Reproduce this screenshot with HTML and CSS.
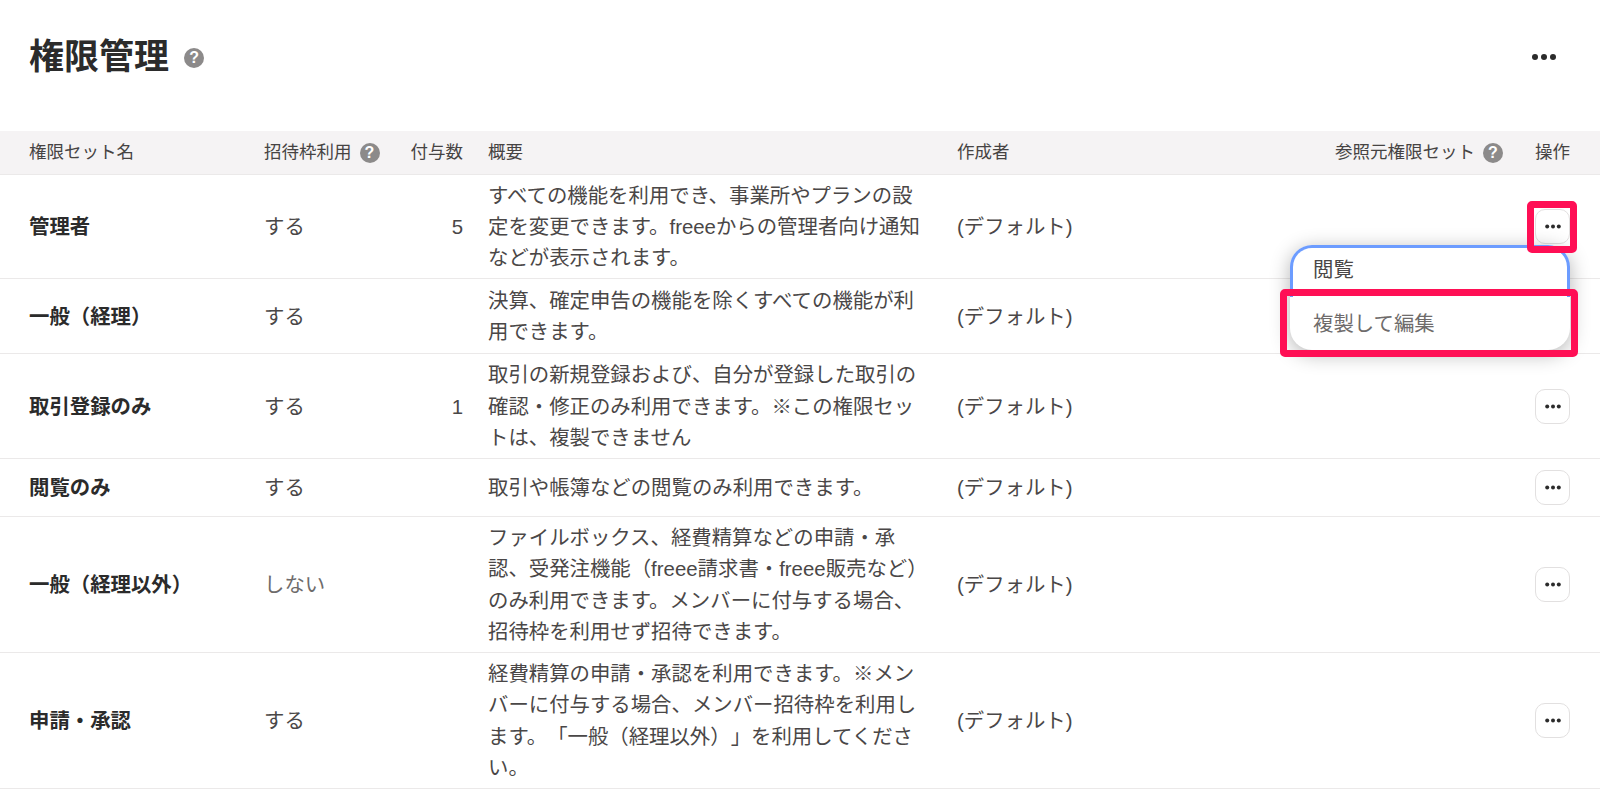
FILE: index.html
```html
<!DOCTYPE html>
<html lang="ja">
<head>
	<meta charset="UTF-8">
	<title>権限管理</title>
	<link rel="stylesheet" href="styles.css">
</head>
<body>

	<!-- Page header -->
	<header class="page-header">
		<div class="page-title">
			<h1>権限管理</h1>
			<span class="help help-large">?</span>
		</div>
		<svg class="more-icon" width="24" height="8" viewBox="0 0 24 8"><circle cx="3" cy="4" r="3"/><circle cx="12" cy="4" r="3"/><circle cx="21" cy="4" r="3"/></svg>
	</header>

	<!-- Permission sets -->
	<table class="perm-table">
		<colgroup>
			<col class="col-name">
			<col class="col-invite">
			<col class="col-count">
			<col class="col-summary">
			<col class="col-author">
			<col class="col-source">
			<col class="col-action">
		</colgroup>
		<thead>
			<tr>
				<th>権限セット名</th>
				<th>招待枠利用<span class="help">?</span></th>
				<th class="num">付与数</th>
				<th>概要</th>
				<th>作成者</th>
				<th class="num">参照元権限セット<span class="help">?</span></th>
				<th class="op">操作</th>
			</tr>
		</thead>
		<tbody>
			<tr>
				<td class="name">管理者</td>
				<td>する</td>
				<td class="num">5</td>
				<td>すべての機能を利用でき、事業所やプランの設定を変更できます。freeeからの管理者向け通知などが表示されます。</td>
				<td>(デフォルト)</td>
				<td></td>
				<td class="op"><button class="dots-btn"><svg width="16" height="5" viewBox="0 0 16 5"><circle cx="2.2" cy="2.5" r="2"/><circle cx="8" cy="2.5" r="2"/><circle cx="13.8" cy="2.5" r="2"/></svg></button></td>
			</tr>
			<tr class="two-line">
				<td class="name">一般（経理）</td>
				<td>する</td>
				<td class="num"></td>
				<td>決算、確定申告の機能を除くすべての機能が利用できます。</td>
				<td>(デフォルト)</td>
				<td></td>
				<td class="op"><button class="dots-btn"><svg width="16" height="5" viewBox="0 0 16 5"><circle cx="2.2" cy="2.5" r="2"/><circle cx="8" cy="2.5" r="2"/><circle cx="13.8" cy="2.5" r="2"/></svg></button></td>
			</tr>
			<tr>
				<td class="name">取引登録のみ</td>
				<td>する</td>
				<td class="num">1</td>
				<td>取引の新規登録および、自分が登録した取引の確認・修正のみ利用できます。※この権限セットは、複製できません</td>
				<td>(デフォルト)</td>
				<td></td>
				<td class="op"><button class="dots-btn"><svg width="16" height="5" viewBox="0 0 16 5"><circle cx="2.2" cy="2.5" r="2"/><circle cx="8" cy="2.5" r="2"/><circle cx="13.8" cy="2.5" r="2"/></svg></button></td>
			</tr>
			<tr class="short">
				<td class="name">閲覧のみ</td>
				<td>する</td>
				<td class="num"></td>
				<td>取引や帳簿などの閲覧のみ利用できます。</td>
				<td>(デフォルト)</td>
				<td></td>
				<td class="op"><button class="dots-btn"><svg width="16" height="5" viewBox="0 0 16 5"><circle cx="2.2" cy="2.5" r="2"/><circle cx="8" cy="2.5" r="2"/><circle cx="13.8" cy="2.5" r="2"/></svg></button></td>
			</tr>
			<tr>
				<td class="name">一般（経理以外）</td>
				<td class="muted">しない</td>
				<td class="num"></td>
				<td>ファイルボックス、経費精算などの申請・承認、受発注機能（freee請求書・freee販売など）のみ利用できます。メンバーに付与する場合、招待枠を利用せず招待できます。</td>
				<td>(デフォルト)</td>
				<td></td>
				<td class="op"><button class="dots-btn"><svg width="16" height="5" viewBox="0 0 16 5"><circle cx="2.2" cy="2.5" r="2"/><circle cx="8" cy="2.5" r="2"/><circle cx="13.8" cy="2.5" r="2"/></svg></button></td>
			</tr>
			<tr>
				<td class="name">申請・承認</td>
				<td>する</td>
				<td class="num"></td>
				<td>経費精算の申請・承認を利用できます。※メンバーに付与する場合、メンバー招待枠を利用します。「一般（経理以外）」を利用してください。</td>
				<td>(デフォルト)</td>
				<td></td>
				<td class="op"><button class="dots-btn"><svg width="16" height="5" viewBox="0 0 16 5"><circle cx="2.2" cy="2.5" r="2"/><circle cx="8" cy="2.5" r="2"/><circle cx="13.8" cy="2.5" r="2"/></svg></button></td>
			</tr>
		</tbody>
	</table>

	<!-- Open menu and the red callouts drawn over the screenshot -->
	<div class="menu">
		<div class="menu-item menu-focus">閲覧</div>
		<div class="menu-item menu-dim">複製して編集</div>
	</div>
	<div class="callout callout-btn"></div>
	<div class="callout callout-item"></div>

</body>
</html>
```

FILE: styles.css
```css
body {
	font-family: "Liberation Sans", "Noto Sans CJK JP", sans-serif;
	color: #4a4747;
	background-color: #fff;
	margin: 0;
	position: relative;
	height: 793px;
	overflow: hidden;
	text-spacing-trim: space-all;
}

.page-header {
	height: 114px;
	margin-bottom: 17px;
	padding: 0 44px 0 29px;
	display: flex;
	align-items: center;
	justify-content: space-between;
}

.page-title {
	display: flex;
	align-items: center;
	gap: 15px;
}

.page-title h1 {
	margin: 0;
	font-size: 35px;
	line-height: 44px;
	font-weight: 700;
	color: #2b2b2b;
}

.more-icon {
	fill: #2b2b2b;
}

.help {
	display: inline-block;
	width: 20px;
	height: 20px;
	margin-left: 8px;
	border-radius: 50%;
	background-color: #8c8a8a;
	color: #fff;
	font-size: 16px;
	font-weight: 700;
	line-height: 20px;
	text-align: center;
	vertical-align: 0;
}

.help-large {
	margin: 1px 0 0;
}

.perm-table {
	width: 1600px;
	border-collapse: collapse;
	table-layout: fixed;
}

.col-name { width: 251px; }
.col-invite { width: 139px; }
.col-count { width: 85px; }
.col-summary { width: 469px; }
.col-author { width: 286px; }
.col-source { width: 285px; }
.col-action { width: 85px; }

th {
	height: 43px;
	padding: 0 12px 4px 13px;
	box-sizing: border-box;
	background-color: #f5f3f4;
	border-bottom: 1px solid #ebe9e9;
	font-size: 17.5px;
	font-weight: 400;
	color: #464343;
	text-align: left;
	white-space: nowrap;
}

th:first-child,
td:first-child {
	padding-left: 29px;
}

td {
	padding: 6px 12px 4px 13px;
	border-bottom: 1px solid #ebe9e9;
	font-size: 20.4px;
	line-height: 31.25px;
	vertical-align: middle;
}

.short td {
	height: 47px;
}

.two-line td {
	height: 64px;
}

.num {
	text-align: right;
}

.name {
	font-weight: 700;
	color: #2b2b2b;
}

.muted {
	color: #6e6b6b;
}

th.op {
	padding-left: 20px;
	padding-right: 0;
}

td.op {
	padding: 5px 0 5px 20px;
}

.dots-btn {
	display: block;
	width: 35px;
	height: 35px;
	padding: 0;
	background-color: #fff;
	border: 1px solid #e2e0e0;
	border-radius: 10px;
}

.dots-btn svg {
	display: block;
	margin: 0 auto;
	fill: #2b2b2b;
}

.menu {
	position: absolute;
	left: 1290px;
	top: 245px;
	width: 280px;
	background-color: #fff;
	border-radius: 22px;
	box-shadow: 0 4px 20px rgba(0, 0, 0, 0.3);
	font-size: 20.4px;
	z-index: 2;
}

.menu-item {
	padding-left: 23px;
}

.menu-focus {
	height: 52px;
	border: 3px solid #6c9cff;
	border-bottom: none;
	border-radius: 22px 22px 0 0;
	padding-left: 20px;
	line-height: 44px;
	box-sizing: border-box;
}

.menu-dim {
	height: 53px;
	line-height: 54px;
	color: #6e6b6b;
	border-radius: 0 0 22px 22px;
}

.callout {
	position: absolute;
	border: 7px solid #ff0f55;
	border-radius: 5px;
	box-sizing: border-box;
	z-index: 3;
}

.callout-btn {
	left: 1527px;
	top: 201px;
	width: 50px;
	height: 52px;
}

.callout-item {
	left: 1280px;
	top: 289px;
	width: 298px;
	height: 68px;
}
```
